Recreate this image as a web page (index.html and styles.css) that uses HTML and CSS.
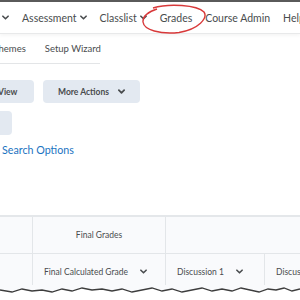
FILE: index.html
```html
<!DOCTYPE html>
<html>

<head>
    <meta charset="UTF-8">
    <meta name="viewport" content="width=device-width, initial-scale=1.0">
    <link rel="stylesheet" href="styles.css">
</head>

<body>
    <!-- top nav -->
    <div class="topline"></div>
    <div class="navbar">
        <span class="nav-item">
            <svg class="chev" viewBox="0 0 8 5"><path d="M1 1 L4 4 L7 1" /></svg>
        </span>
        <span class="nav-item">Assessment
            <svg class="chev" viewBox="0 0 8 5"><path d="M1 1 L4 4 L7 1" /></svg>
        </span>
        <span class="nav-item">Classlist
            <svg class="chev" viewBox="0 0 8 5"><path d="M1 1 L4 4 L7 1" /></svg>
        </span>
        <span class="nav-item">Grades</span>
        <span class="nav-item">Course Admin</span>
        <span class="nav-item">Help</span>
    </div>

    <!-- callout drawn over Grades -->
    <svg class="callout" viewBox="0 0 66 32" xmlns="http://www.w3.org/2000/svg">
        <path d="M12 5 C28 0 56 2 63 9 C67 15 58 26 38 29.5 C19 31.5 3 27 2 19 C1.5 13 7 9 16 6" fill="none" stroke="#d8393a" stroke-width="1.4" />
    </svg>

    <!-- sub nav -->
    <div class="subnav">
        <span class="sub-item">Themes</span>
        <span class="sub-item">Setup Wizard</span>
    </div>

    <!-- action buttons -->
    <div class="actions">
        <div class="btn btn-view">View</div>
        <div class="btn btn-more">More Actions
            <svg class="chev chev-btn" viewBox="0 0 8 5"><path d="M1 1 L4 4 L7 1" /></svg>
        </div>
    </div>
    <div class="actions">
        <div class="btn btn-small"></div>
    </div>

    <a class="search-link">Search Options</a>

    <!-- grades table -->
    <div class="grid">
        <div class="cell c1 top"></div>
        <div class="cell c2 title">Final Grades</div>
        <div class="cell span"></div>
        <div class="cell c1"></div>
        <div class="cell col">Final Calculated Grade
            <svg class="chev" viewBox="0 0 8 5"><path d="M1 1 L4 4 L7 1" /></svg>
        </div>
        <div class="cell col">Discussion 1
            <svg class="chev" viewBox="0 0 8 5"><path d="M1 1 L4 4 L7 1" /></svg>
        </div>
        <div class="cell col">Discussion 2</div>
    </div>

    <svg class="torn" viewBox="0 0 300 12" preserveAspectRatio="none" xmlns="http://www.w3.org/2000/svg">
        <path d="M0 0 H300 V4 L292 6 L284 3 L276 5 L268 4 L259 7 L250 5 L241 3 L232 6 L222 4 L212 6 L202 3 L192 5 L182 7 L172 4 L162 6 L152 3 L142 5 L132 7 L122 4 L112 6 L102 4 L92 5 L82 3 L72 6 L62 4 L52 7 L42 5 L32 6 L22 4 L12 7 L0 5 Z" fill="#f9fafc" />
        <path d="M0 5 L12 7 L22 4 L32 6 L42 5 L52 7 L62 4 L72 6 L82 3 L92 5 L102 4 L112 6 L122 4 L132 7 L142 5 L152 3 L162 6 L172 4 L182 7 L192 5 L202 3 L212 6 L222 4 L232 6 L241 3 L250 5 L259 7 L268 4 L276 5 L284 3 L292 6 L300 4" fill="none" stroke="#3d3d3d" stroke-width="1.3" />
    </svg>
</body>

</html>
```

FILE: styles.css
```css
/* base */
body {
    margin: 0;
    width: 300px;
    height: 300px;
    overflow: hidden;
    position: relative;
    font-family: Lato, "Open Sans", sans-serif;
    color: #494c4e;
    background-color: #ffffff;
}

.chev {
    width: 7px;
    height: 5px;
    margin-left: 3px;
    vertical-align: 1px;
    fill: none;
    stroke: #494c4e;
    stroke-width: 1.8;
    stroke-linecap: round;
    stroke-linejoin: round;
}

/* top nav */
.topline {
    height: 2px;
    background-color: #5a5a5a;
}

.navbar {
    height: 31px;
    display: flex;
    align-items: center;
    gap: 13px;
    padding-left: 2px;
    white-space: nowrap;
    border-bottom: 1px solid #e8e9ea;
    box-shadow: 0 2px 3px rgba(0, 0, 0, 0.04);
    font-size: 10.5px;
}

.nav-item {
    display: flex;
    align-items: center;
    gap: 3px;
}

.nav-item .chev {
    margin-left: 0;
    vertical-align: 0;
}

.callout {
    position: absolute;
    left: 141px;
    top: 3px;
    width: 66px;
    height: 32px;
}

/* sub nav */
.subnav {
    width: 107px;
    height: 29px;
    display: flex;
    align-items: center;
    gap: 19px;
    margin-left: -7px;
    padding-left: 0;
    border-bottom: 1px solid #e3e5e7;
    font-size: 9.5px;
    white-space: nowrap;
}

/* buttons */
.actions {
    display: flex;
    gap: 9px;
    margin-top: 16px;
}

.actions + .actions {
    margin-top: 8px;
}

.btn {
    height: 23px;
    display: flex;
    align-items: center;
    justify-content: center;
    background-color: #e3e9f1;
    border-radius: 4px;
    font-size: 8.5px;
    font-weight: bold;
    color: #494c4e;
}

.btn-view {
    width: 34px;
    border-radius: 0 4px 4px 0;
    justify-content: flex-start;
    text-indent: -2px;
}

.btn-more {
    width: 97px;
}

.chev-btn {
    margin-left: 9px;
    stroke-width: 2;
}

.btn-small {
    width: 12px;
    height: 24px;
    border-radius: 0 4px 4px 0;
}

.search-link {
    display: block;
    margin-top: 8px;
    padding-left: 2px;
    color: #1a73c1;
    font-size: 10.7px;
}

/* table */
.grid {
    margin-top: 59px;
    display: grid;
    grid-template-columns: 33px 133px 99px 100px;
    grid-template-rows: 37px 35px;
    background-color: #f9fafc;
    border-top: 2px solid #e4e7ea;
    font-size: 8.5px;
    white-space: nowrap;
}

.cell {
    display: flex;
    align-items: center;
    border-right: 1px solid #e3e6e9;
}

.span {
    grid-column: 3 / 5;
    border-right: none;
}

.top,
.title,
.span {
    border-bottom: 1px solid #e3e6e9;
}

.title {
    justify-content: center;
}

.col {
    padding-left: 11px;
}

.col .chev {
    margin-left: 12px;
}

.torn {
    display: block;
    width: 300px;
    height: 12px;
    margin-top: -4px;
}
```
